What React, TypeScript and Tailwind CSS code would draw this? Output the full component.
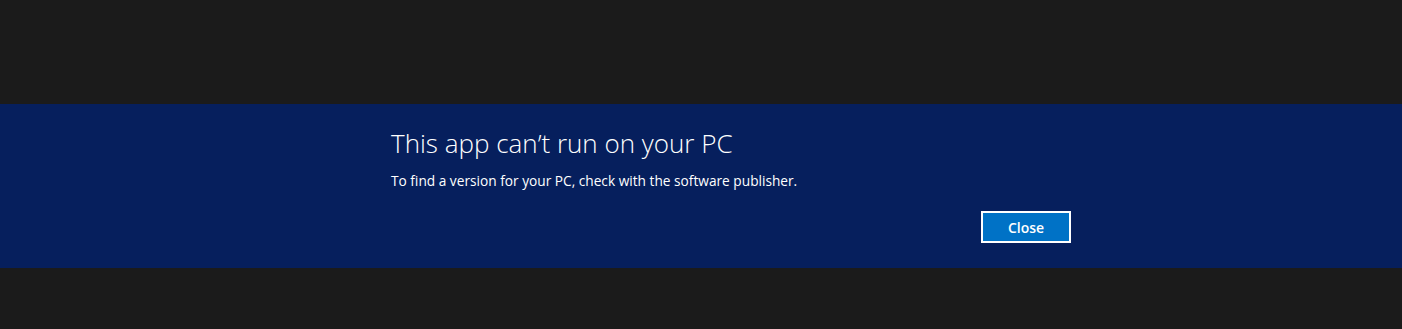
export default function App() {
  return (
    <div className="flex h-[329px] w-full flex-col bg-[#1b1b1b] font-['Open_Sans',sans-serif]">
      <div className="h-[104px]" />
      <div className="h-[164px] bg-[#061f5d]">
        <div className="ml-[391px] flex w-[680px] flex-col pt-[22px]">
          <h1 className="text-[26px] font-light leading-[34px] text-white">
            This app can’t run on your PC
          </h1>
          <p className="mt-[12px] text-[13.7px] leading-[18px] text-white">
            To find a version for your PC, check with the software publisher.
          </p>
          <div className="mt-[21px] flex justify-end">
            <button className="h-[32px] w-[90px] border-2 border-white bg-[#0072c6] text-[14px] font-semibold text-white">
              Close
            </button>
          </div>
        </div>
      </div>
    </div>
  );
}
